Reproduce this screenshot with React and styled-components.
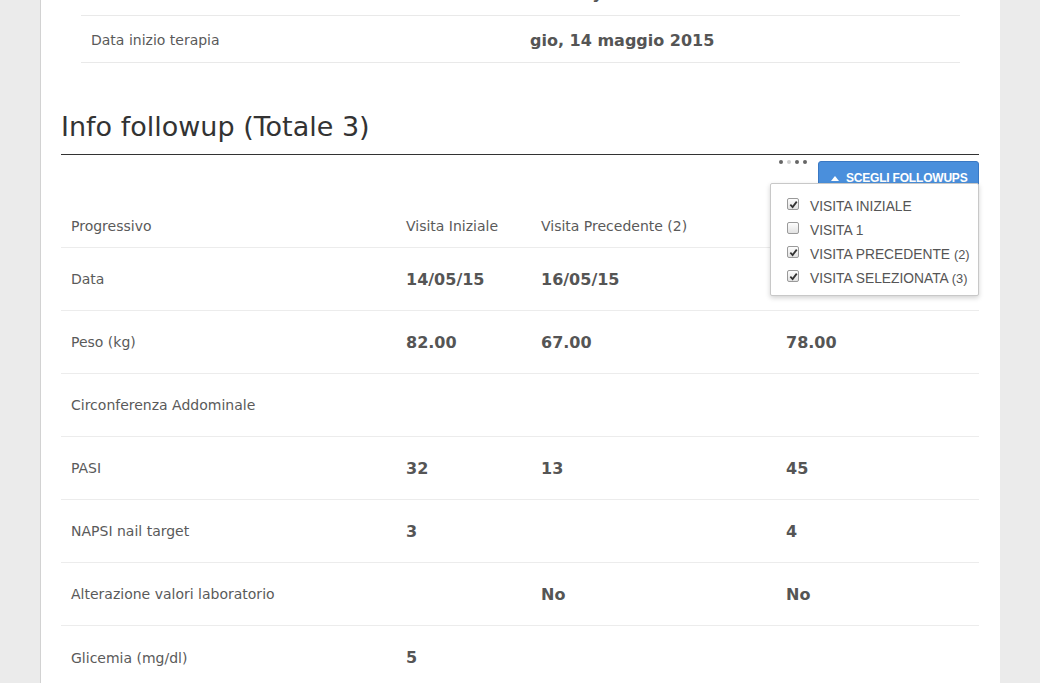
import React from "react";
import styled, { createGlobalStyle } from "styled-components";

const GlobalStyle = createGlobalStyle`
  html, body {
    margin: 0;
    padding: 0;
    background: #ebebeb;
    height: 683px;
    overflow: hidden;
  }
  * { box-sizing: border-box; }
`;

const Page = styled.div`
  display: flex;
  height: 683px;
  overflow: hidden;
`;

const Sheet = styled.div`
  margin-left: 40px;
  width: 960px;
  background: #fff;
  border-left: 1px solid #d2d2d2;
  font-family: "DejaVu Sans", Verdana, sans-serif;
  color: #555;
`;

const Scroller = styled.div`
  margin-top: -31px;
`;

const InfoList = styled.div`
  padding: 0 40px;
`;

const InfoRow = styled.div`
  display: grid;
  grid-template-columns: 449px 1fr;
  align-items: center;
  height: 47px;
  padding-top: 2px;
  border-bottom: 1px solid #e9e9e9;
`;

const InfoLabel = styled.div`
  padding-left: 10px;
  font-size: 14px;
  color: #5a5a5a;
`;

const InfoValue = styled.div`
  font-size: 16px;
  font-weight: bold;
  color: #555;
`;

const Section = styled.div`
  padding: 0 21px 0 20px;
`;

const Heading = styled.h2`
  margin: 48px 0 0;
  padding-bottom: 12px;
  font-size: 27px;
  font-weight: normal;
  line-height: 31px;
  color: #333;
  border-bottom: 1px solid #333;
`;

const Toolbar = styled.div`
  position: relative;
  display: flex;
  justify-content: flex-end;
  align-items: flex-start;
  gap: 11px;
  margin-top: 6px;
  height: 31px;
`;

const Dots = styled.div`
  display: flex;
  gap: 4px;
  margin-top: -1px;
`;

const Dot = styled.span`
  width: 4px;
  height: 4px;
  border-radius: 50%;
  background: ${(p) => (p.$dim ? "#cfcfcf" : "#666")};
`;

const ChooseButton = styled.button`
  display: flex;
  align-items: center;
  gap: 7px;
  width: 161px;
  height: 34px;
  padding: 0 10px 0 12px;
  border: 1px solid #3a78c3;
  border-radius: 3px;
  background: #4a8fdc;
  color: #fff;
  font-family: "Liberation Sans", Arial, sans-serif;
  font-size: 12px;
  font-weight: bold;
  letter-spacing: -0.2px;
`;

const Caret = styled.span`
  width: 0;
  height: 0;
  border-left: 4px solid transparent;
  border-right: 4px solid transparent;
  border-bottom: 5px solid #fff;
`;

const Menu = styled.div`
  position: absolute;
  top: 22px;
  right: 0;
  width: 209px;
  padding: 10px 0 5px 16px;
  background: #fff;
  border: 1px solid #c8c8c8;
  border-radius: 2px;
  box-shadow: 0 2px 5px rgba(0, 0, 0, 0.18);
  z-index: 2;
`;

const MenuItem = styled.label`
  display: flex;
  align-items: center;
  gap: 11px;
  height: 24px;
  font-family: "Liberation Sans", Arial, sans-serif;
  font-size: 13.8px;
  color: #555;
`;

const Box = styled.span`
  display: flex;
  align-items: center;
  justify-content: center;
  width: 12px;
  height: 12px;
  margin-top: -4px;
  border: 1px solid #9a9a9a;
  border-radius: 2px;
  background: linear-gradient(#fdfdfd, #e2e2e2);
`;

const Count = styled.span`
  font-size: 12.8px;
`;

const Table = styled.div`
  display: flex;
  flex-direction: column;
`;

const Row = styled.div`
  display: grid;
  grid-template-columns: 335px 135px 245px 1fr;
  align-items: ${(p) => (p.$head ? "end" : "center")};
  height: ${(p) => (p.$head ? "56px" : "63px")};
  padding-bottom: ${(p) => (p.$head ? "13px" : "0")};
  border-bottom: ${(p) => (p.$last ? "none" : "1px solid #ececec")};
`;

const Label = styled.div`
  padding-left: 10px;
  font-size: 14px;
  color: #5a5a5a;
`;

const HeadCell = styled.div`
  padding-left: 10px;
  font-size: 14px;
  color: #5a5a5a;
`;

const Value = styled.div`
  padding-left: 10px;
  font-size: 16px;
  font-weight: bold;
  color: #555;
`;

const Check = ({ on }) => (
  <Box>
    {on && (
      <svg width="9" height="9" viewBox="0 0 10 10">
        <path d="M1.5 5.2 L4 7.8 L8.6 1.8" fill="none" stroke="#333" strokeWidth="2" />
      </svg>
    )}
  </Box>
);

const rows = [
  ["Data", "14/05/15", "16/05/15", "18/05/15"],
  ["Peso (kg)", "82.00", "67.00", "78.00"],
  ["Circonferenza Addominale", "", "", ""],
  ["PASI", "32", "13", "45"],
  ["NAPSI nail target", "3", "", "4"],
  ["Alterazione valori laboratorio", "", "No", "No"],
  ["Glicemia (mg/dl)", "5", "", ""],
];

const menu = [
  ["VISITA INIZIALE", "", true],
  ["VISITA 1", "", false],
  ["VISITA PRECEDENTE", "(2)", true],
  ["VISITA SELEZIONATA", "(3)", true],
];

export default function App() {
  return (
    <>
      <GlobalStyle />
      <Page>
        <Sheet>
          <Scroller>
            <InfoList>
              <InfoRow>
                <InfoLabel>Farmaco</InfoLabel>
                <InfoValue>Cosentyx</InfoValue>
              </InfoRow>
              <InfoRow>
                <InfoLabel>Data inizio terapia</InfoLabel>
                <InfoValue>gio, 14 maggio 2015</InfoValue>
              </InfoRow>
            </InfoList>
            <Section>
              <Heading>Info followup (Totale 3)</Heading>
              <Toolbar>
                <Dots>
                  <Dot />
                  <Dot $dim />
                  <Dot />
                  <Dot />
                </Dots>
                <ChooseButton>
                  <Caret />
                  SCEGLI FOLLOWUPS
                </ChooseButton>
                <Menu>
                  {menu.map(([text, count, on]) => (
                    <MenuItem key={text}>
                      <Check on={on} />
                      <span>
                        {text} {count && <Count>{count}</Count>}
                      </span>
                    </MenuItem>
                  ))}
                </Menu>
              </Toolbar>
              <Table>
                <Row $head>
                  <HeadCell>Progressivo</HeadCell>
                  <HeadCell>Visita Iniziale</HeadCell>
                  <HeadCell>Visita Precedente (2)</HeadCell>
                  <HeadCell>Visita Selezionata (3)</HeadCell>
                </Row>
                {rows.map(([label, a, b, c], i) => (
                  <Row key={label} $last={i === rows.length - 1}>
                    <Label>{label}</Label>
                    <Value>{a}</Value>
                    <Value>{b}</Value>
                    <Value>{c}</Value>
                  </Row>
                ))}
              </Table>
            </Section>
          </Scroller>
        </Sheet>
      </Page>
    </>
  );
}
